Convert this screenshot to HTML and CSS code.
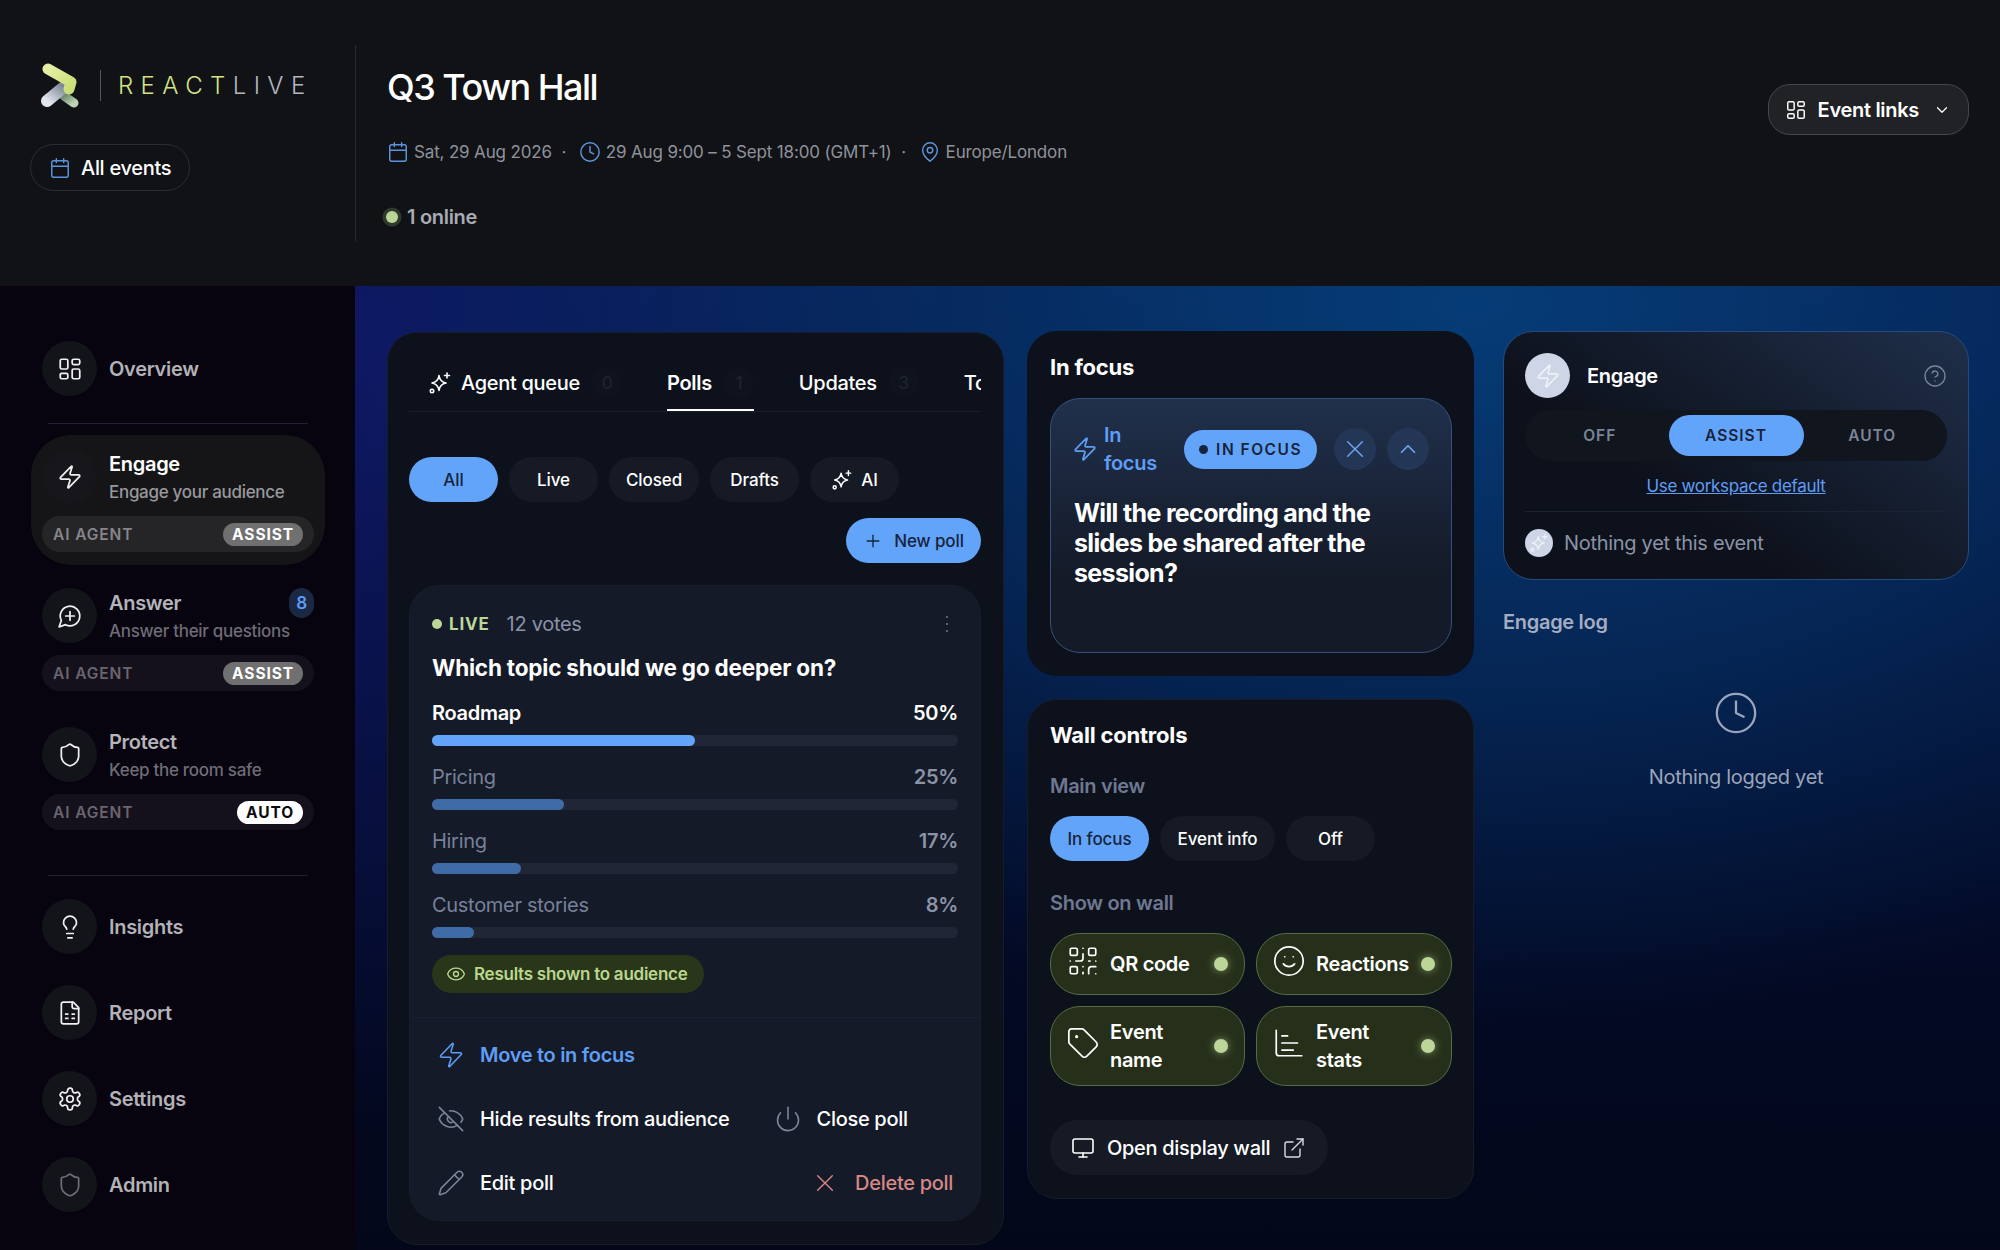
FILE: index.html
```html
<!DOCTYPE html>
<html lang="en">
<head>
    <meta charset="UTF-8">
    <meta name="viewport" content="width=device-width, initial-scale=1.0">
    <title>Q3 Town Hall</title>
    <link rel="stylesheet" href="styles.css">
</head>
<body>
    <svg class="sprite" xmlns="http://www.w3.org/2000/svg">
        <symbol id="i-dash" viewBox="0 0 24 24"><rect x="3" y="3" width="7" height="9" rx="1.5"/><rect x="14" y="3" width="7" height="5" rx="1.5"/><rect x="14" y="12" width="7" height="9" rx="1.5"/><rect x="3" y="16" width="7" height="5" rx="1.5"/></symbol>
        <symbol id="i-zap" viewBox="0 0 24 24"><path d="M4 14a1 1 0 0 1-.78-1.63l9.9-10.2a.5.5 0 0 1 .86.46l-1.92 6.02A1 1 0 0 0 13 10h7a1 1 0 0 1 .78 1.63l-9.9 10.2a.5.5 0 0 1-.86-.46l1.92-6.02A1 1 0 0 0 11 14z"/></symbol>
        <symbol id="i-msg" viewBox="0 0 24 24"><path d="M7.9 20A9 9 0 1 0 4 16.1L2 22Z"/><path d="M8 12h8"/><path d="M12 8v8"/></symbol>
        <symbol id="i-shield" viewBox="0 0 24 24"><path d="M20 13c0 5-3.5 7.5-7.66 8.95a1 1 0 0 1-.67-.01C7.5 20.5 4 18 4 13V6a1 1 0 0 1 1-1c2 0 4.5-1.2 6.24-2.72a1.17 1.17 0 0 1 1.52 0C14.51 3.81 17 5 19 5a1 1 0 0 1 1 1z"/></symbol>
        <symbol id="i-bulb" viewBox="0 0 24 24"><path d="M15 14c.2-1 .7-1.7 1.5-2.5 1-.9 1.5-2.2 1.5-3.5A6 6 0 0 0 6 8c0 1 .2 2.2 1.5 3.5.7.7 1.3 1.5 1.5 2.5"/><path d="M9 18h6"/><path d="M10 22h4"/></symbol>
        <symbol id="i-report" viewBox="0 0 24 24"><path d="M15 2H6a2 2 0 0 0-2 2v16a2 2 0 0 0 2 2h12a2 2 0 0 0 2-2V7Z"/><path d="M14 2v4a2 2 0 0 0 2 2h4"/><path d="M8 13h2"/><path d="M14 13h2"/><path d="M8 17h2"/><path d="M14 17h2"/></symbol>
        <symbol id="i-gear" viewBox="0 0 24 24"><path d="M12.22 2h-.44a2 2 0 0 0-2 2v.18a2 2 0 0 1-1 1.73l-.43.25a2 2 0 0 1-2 0l-.15-.08a2 2 0 0 0-2.73.73l-.22.38a2 2 0 0 0 .73 2.73l.15.1a2 2 0 0 1 1 1.72v.51a2 2 0 0 1-1 1.74l-.15.09a2 2 0 0 0-.73 2.73l.22.38a2 2 0 0 0 2.73.73l.15-.08a2 2 0 0 1 2 0l.43.25a2 2 0 0 1 1 1.73V20a2 2 0 0 0 2 2h.44a2 2 0 0 0 2-2v-.18a2 2 0 0 1 1-1.73l.43-.25a2 2 0 0 1 2 0l.15.08a2 2 0 0 0 2.73-.73l.22-.39a2 2 0 0 0-.73-2.73l-.15-.08a2 2 0 0 1-1-1.74v-.5a2 2 0 0 1 1-1.74l.15-.09a2 2 0 0 0 .73-2.73l-.22-.38a2 2 0 0 0-2.73-.73l-.15.08a2 2 0 0 1-2 0l-.43-.25a2 2 0 0 1-1-1.73V4a2 2 0 0 0-2-2z"/><circle cx="12" cy="12" r="3"/></symbol>
        <symbol id="i-cal" viewBox="0 0 24 24"><path d="M8 2v4"/><path d="M16 2v4"/><rect x="3" y="4" width="18" height="18" rx="2"/><path d="M3 10h18"/></symbol>
        <symbol id="i-clock" viewBox="0 0 24 24"><circle cx="12" cy="12" r="10"/><path d="M12 6v6l4 2"/></symbol>
        <symbol id="i-pin" viewBox="0 0 24 24"><path d="M20 10c0 6-8 12-8 12s-8-6-8-12a8 8 0 0 1 16 0Z"/><circle cx="12" cy="10" r="3"/></symbol>
        <symbol id="i-down" viewBox="0 0 24 24"><path d="m6 9 6 6 6-6"/></symbol>
        <symbol id="i-up" viewBox="0 0 24 24"><path d="m18 15-6-6-6 6"/></symbol>
        <symbol id="i-spark" viewBox="0 0 24 24"><path d="M11 4.500c.6 4.600 2.400 6.600 7 7.500-4.600.9-6.400 2.900-7 7.500-.6-4.600-2.400-6.600-7-7.500 4.600-.9 6.400-2.900 7-7.500z"/><path d="M19 2v5"/><path d="M21.500 4.500h-5"/><circle cx="4" cy="20" r="1.700"/></symbol>
        <symbol id="i-plus" viewBox="0 0 24 24"><path d="M5 12h14"/><path d="M12 5v14"/></symbol>
        <symbol id="i-x" viewBox="0 0 24 24"><path d="m4 4 16 16"/><path d="M20 4 4 20"/></symbol>
        <symbol id="i-eye" viewBox="0 0 24 24"><path d="M2.062 12.348a1 1 0 0 1 0-.696 10.750 10.750 0 0 1 19.876 0 1 1 0 0 1 0 .696 10.750 10.750 0 0 1-19.876 0"/><circle cx="12" cy="12" r="3"/></symbol>
        <symbol id="i-eyeoff" viewBox="0 0 24 24"><path d="M10.733 5.076a10.744 10.744 0 0 1 11.205 6.575 1 1 0 0 1 0 .696 10.747 10.747 0 0 1-1.444 2.490"/><path d="M14.084 14.158a3 3 0 0 1-4.242-4.242"/><path d="M17.479 17.499a10.750 10.750 0 0 1-15.417-5.151 1 1 0 0 1 0-.696 10.750 10.750 0 0 1 4.446-5.143"/><path d="m2 2 20 20"/></symbol>
        <symbol id="i-power" viewBox="0 0 24 24"><path d="M12 2v10"/><path d="M18.400 6.600a9 9 0 1 1-12.770.040"/></symbol>
        <symbol id="i-pencil" viewBox="0 0 24 24"><path d="M21.174 6.812a1 1 0 0 0-3.986-3.987L3.842 16.174a2 2 0 0 0-.5.830l-1.321 4.352a.5.5 0 0 0 .623.622l4.353-1.320a2 2 0 0 0 .830-.497z"/><path d="m15 5 4 4"/></symbol>
        <symbol id="i-qr" viewBox="0 0 24 24"><rect x="3" y="3" width="5" height="5" rx="1"/><rect x="16" y="3" width="5" height="5" rx="1"/><rect x="3" y="16" width="5" height="5" rx="1"/><path d="M21 16h-3a2 2 0 0 0-2 2v3"/><path d="M21 21v.01"/><path d="M12 7v3a2 2 0 0 1-2 2H7"/><path d="M3 12h.01"/><path d="M12 3h.01"/><path d="M12 16v.01"/><path d="M16 12h1"/><path d="M21 12v.01"/><path d="M12 21v-1"/></symbol>
        <symbol id="i-smile" viewBox="0 0 24 24"><circle cx="12" cy="12" r="10"/><path d="M8 14s1.500 2 4 2 4-2 4-2"/><path d="M9 9h.01"/><path d="M15 9h.01"/></symbol>
        <symbol id="i-tag" viewBox="0 0 24 24"><path d="M12.586 2.586A2 2 0 0 0 11.172 2H4a2 2 0 0 0-2 2v7.172a2 2 0 0 0 .586 1.414l8.704 8.704a2.426 2.426 0 0 0 3.420 0l6.580-6.580a2.426 2.426 0 0 0 0-3.420z"/><circle cx="7.500" cy="7.500" r=".5"/></symbol>
        <symbol id="i-chart" viewBox="0 0 24 24"><path d="M3 3v16a2 2 0 0 0 2 2h16"/><path d="M7 7h4"/><path d="M7 12h11"/><path d="M7 17h8"/></symbol>
        <symbol id="i-monitor" viewBox="0 0 24 24"><rect x="2" y="3" width="20" height="14" rx="2"/><path d="M8 21h8"/><path d="M12 17v4"/></symbol>
        <symbol id="i-ext" viewBox="0 0 24 24"><path d="M15 3h6v6"/><path d="M10 14 21 3"/><path d="M18 13v6a2 2 0 0 1-2 2H5a2 2 0 0 1-2-2V8a2 2 0 0 1 2-2h6"/></symbol>
        <symbol id="i-help" viewBox="0 0 24 24"><circle cx="12" cy="12" r="10"/><path d="M9.090 9a3 3 0 0 1 5.830 1c0 2-3 3-3 3"/><path d="M12 17h.01"/></symbol>
    </svg>

    <header class="topbar">
        <div class="brand">
            <div class="logo">
                <svg class="logo-mark" viewBox="0 0 40 46" fill="none" stroke-linecap="round" stroke-linejoin="round">
                    <defs>
                        <linearGradient id="logoLime" x1="0" y1="0" x2="1" y2="1"><stop offset="0" stop-color="#e4efa4"/><stop offset="1" stop-color="#cbdd78"/></linearGradient>
                        <linearGradient id="logoGrey" x1="0" y1="1" x2="1" y2="0"><stop offset="0" stop-color="#e3e7ee"/><stop offset="1" stop-color="#7d8798"/></linearGradient>
                        <linearGradient id="logoGreen" x1="0" y1="0" x2="1" y2="1"><stop offset="0" stop-color="#6f8a70"/><stop offset="1" stop-color="#bdd4b4"/></linearGradient>
                    </defs>
                    <path d="M24 34 34 41" stroke="url(#logoGreen)" stroke-width="9"/>
                    <path d="M7 39 24 25" stroke="url(#logoGrey)" stroke-width="12"/>
                    <path d="M8 7 31 20 29 27" stroke="url(#logoLime)" stroke-width="11"/>
                </svg>
                <span class="logo-bar"></span>
                <span class="logo-text"><span class="logo-lime">REACT</span>LIVE</span>
            </div>
            <a class="all-events"><svg class="ic ic-22 blue"><use href="#i-cal"/></svg>All events</a>
        </div>
        <div class="event-info">
            <h1>Q3 Town Hall</h1>
            <div class="meta">
                <svg class="ic ic-22 blue"><use href="#i-cal"/></svg><span>Sat, 29 Aug 2026</span><span class="sep">·</span>
                <svg class="ic ic-22 blue"><use href="#i-clock"/></svg><span>29 Aug 9:00 – 5 Sept 18:00 (GMT+1)</span><span class="sep">·</span>
                <svg class="ic ic-22 blue"><use href="#i-pin"/></svg><span>Europe/London</span>
            </div>
            <div class="online"><span class="online-dot"></span>1 online</div>
        </div>
        <button class="event-links"><svg class="ic ic-22"><use href="#i-dash"/></svg>Event links<svg class="ic ic-18"><use href="#i-down"/></svg></button>
    </header>

    <div class="layout">
        <nav class="sidebar">
            <a class="nav-link"><span class="nav-circle"><svg class="ic ic-26"><use href="#i-dash"/></svg></span>Overview</a>
            <div class="nav-rule first"></div>

            <div class="nav-card active">
                <div class="nav-main">
                    <span class="nav-circle"><svg class="ic ic-26"><use href="#i-zap"/></svg></span>
                    <div class="nav-label"><div class="nav-title">Engage</div><div class="nav-sub">Engage your audience</div></div>
                </div>
                <div class="agent"><span>AI AGENT</span><span class="agent-mode">ASSIST</span></div>
            </div>
            <div class="nav-card">
                <div class="nav-main">
                    <span class="nav-circle"><svg class="ic ic-26"><use href="#i-msg"/></svg></span>
                    <div class="nav-label"><div class="nav-title">Answer</div><div class="nav-sub">Answer their questions</div></div>
                    <span class="count">8</span>
                </div>
                <div class="agent"><span>AI AGENT</span><span class="agent-mode">ASSIST</span></div>
            </div>
            <div class="nav-card">
                <div class="nav-main">
                    <span class="nav-circle"><svg class="ic ic-26"><use href="#i-shield"/></svg></span>
                    <div class="nav-label"><div class="nav-title">Protect</div><div class="nav-sub">Keep the room safe</div></div>
                </div>
                <div class="agent"><span>AI AGENT</span><span class="agent-mode auto">AUTO</span></div>
            </div>

            <div class="nav-rule second"></div>
            <div class="nav-list">
                <a class="nav-link"><span class="nav-circle"><svg class="ic ic-26"><use href="#i-bulb"/></svg></span>Insights</a>
                <a class="nav-link"><span class="nav-circle"><svg class="ic ic-26"><use href="#i-report"/></svg></span>Report</a>
                <a class="nav-link"><span class="nav-circle"><svg class="ic ic-26"><use href="#i-gear"/></svg></span>Settings</a>
                <a class="nav-link"><span class="nav-circle"><svg class="ic ic-26 dim"><use href="#i-shield"/></svg></span>Admin</a>
            </div>
        </nav>

        <main class="content">
            <section class="panel polls">
                <div class="tabs">
                    <div class="tab first"><svg class="ic ic-26"><use href="#i-spark"/></svg>Agent queue<span class="tab-count">0</span></div>
                    <div class="tab current">Polls<span class="tab-count">1</span></div>
                    <div class="tab">Updates<span class="tab-count">3</span></div>
                    <div class="tab">Topics</div>
                </div>
                <div class="chips filter-chips">
                    <span class="chip on">All</span>
                    <span class="chip">Live</span>
                    <span class="chip">Closed</span>
                    <span class="chip">Drafts</span>
                    <span class="chip"><svg class="ic ic-22"><use href="#i-spark"/></svg>AI</span>
                </div>
                <div class="new-row"><span class="chip on new-poll"><svg class="ic ic-20"><use href="#i-plus"/></svg>New poll</span></div>

                <article class="poll">
                    <div class="poll-body">
                        <div class="poll-top">
                            <span class="live-dot"></span><span class="live">LIVE</span><span class="votes">12 votes</span>
                            <span class="kebab"><i></i><i></i><i></i></span>
                        </div>
                        <h3 class="question">Which topic should we go deeper on?</h3>
                        <div class="option lead"><div class="option-row"><span>Roadmap</span><span>50%</span></div><div class="track"><div class="fill" style="width:50%"></div></div></div>
                        <div class="option"><div class="option-row"><span>Pricing</span><span class="pct">25%</span></div><div class="track"><div class="fill" style="width:25%"></div></div></div>
                        <div class="option"><div class="option-row"><span>Hiring</span><span class="pct">17%</span></div><div class="track"><div class="fill" style="width:17%"></div></div></div>
                        <div class="option"><div class="option-row"><span>Customer stories</span><span class="pct">8%</span></div><div class="track"><div class="fill" style="width:8%"></div></div></div>
                        <div class="results"><svg class="ic ic-20"><use href="#i-eye"/></svg>Results shown to audience</div>
                    </div>
                    <div class="poll-actions">
                        <div class="action-row"><a class="action accent"><svg class="ic ic-28"><use href="#i-zap"/></svg>Move to in focus</a></div>
                        <div class="action-row"><a class="action"><svg class="ic ic-28 muted"><use href="#i-eyeoff"/></svg>Hide results from audience</a><a class="action close"><svg class="ic ic-28 muted"><use href="#i-power"/></svg>Close poll</a></div>
                        <div class="action-row spread"><a class="action"><svg class="ic ic-28 muted"><use href="#i-pencil"/></svg>Edit poll</a><a class="action danger"><svg class="ic ic-22"><use href="#i-x"/></svg>Delete poll</a></div>
                    </div>
                </article>
            </section>

            <div class="middle">
                <section class="panel focus-panel">
                    <h2>In focus</h2>
                    <div class="focus-card">
                        <div class="focus-head">
                            <svg class="ic ic-26 accent-ic"><use href="#i-zap"/></svg>
                            <span class="focus-label">In focus</span>
                            <span class="focus-pill"><i></i>IN FOCUS</span>
                            <span class="round first-round"><svg class="ic ic-22"><use href="#i-x"/></svg></span>
                            <span class="round"><svg class="ic ic-26"><use href="#i-up"/></svg></span>
                        </div>
                        <p class="focus-text">Will the recording and the slides be shared after the session?</p>
                    </div>
                </section>

                <section class="panel wall">
                    <h2>Wall controls</h2>
                    <div class="field-label">Main view</div>
                    <div class="chips">
                        <span class="chip on">In focus</span>
                        <span class="chip">Event info</span>
                        <span class="chip">Off</span>
                    </div>
                    <div class="field-label second-label">Show on wall</div>
                    <div class="toggles">
                        <div class="toggle"><svg class="ic ic-34"><use href="#i-qr"/></svg><span class="toggle-text">QR code</span><span class="toggle-dot"></span></div>
                        <div class="toggle"><svg class="ic ic-34"><use href="#i-smile"/></svg><span class="toggle-text">Reactions</span><span class="toggle-dot"></span></div>
                        <div class="toggle"><svg class="ic ic-34"><use href="#i-tag"/></svg><span class="toggle-text">Event name</span><span class="toggle-dot"></span></div>
                        <div class="toggle"><svg class="ic ic-34"><use href="#i-chart"/></svg><span class="toggle-text">Event stats</span><span class="toggle-dot"></span></div>
                    </div>
                    <a class="open-wall"><svg class="ic ic-24"><use href="#i-monitor"/></svg>Open display wall<svg class="ic ic-24"><use href="#i-ext"/></svg></a>
                </section>
            </div>

            <aside class="right">
                <section class="agent-card">
                    <div class="agent-head">
                        <span class="agent-avatar"><svg class="ic ic-26"><use href="#i-zap"/></svg></span>
                        <span class="agent-name">Engage</span>
                        <svg class="ic ic-24 help"><use href="#i-help"/></svg>
                    </div>
                    <div class="segments">
                        <span class="segment">OFF</span>
                        <span class="segment on">ASSIST</span>
                        <span class="segment">AUTO</span>
                    </div>
                    <a class="default-link">Use workspace default</a>
                    <div class="agent-rule"></div>
                    <div class="agent-note"><span class="note-avatar"><svg class="ic ic-20"><use href="#i-spark"/></svg></span>Nothing yet this event</div>
                </section>
                <div class="log-title">Engage log</div>
                <div class="log-empty">
                    <svg class="ic ic-40"><use href="#i-clock"/></svg>
                    <div>Nothing logged yet</div>
                </div>
            </aside>
        </main>
    </div>
</body>
</html>
```

FILE: styles.css
```css
* {
    box-sizing: border-box;
}
html, body {
    margin: 0;
    height: 1250px;
    overflow: hidden;
}
body {
    font-family: Inter, "Noto Sans", sans-serif;
    font-size: 20px;
    letter-spacing: -0.3px;
    color: #fff;
    background: #07030f;
}
h1, h2, h3, p {
    margin: 0;
}
.sprite {
    display: none;
}

/* icons */
.ic {
    fill: none;
    stroke: currentColor;
    stroke-width: 1.6;
    stroke-linecap: round;
    stroke-linejoin: round;
    flex: none;
}
.ic-18 { width: 18px; height: 18px; }
.ic-20 { width: 20px; height: 20px; }
.ic-22 { width: 22px; height: 22px; }
.ic-24 { width: 24px; height: 24px; }
.ic-26 { width: 26px; height: 26px; }
.ic-28 { width: 28px; height: 28px; stroke-width: 1.35; }
.ic-34 { width: 34px; height: 34px; stroke-width: 1.2; }
.ic-40 { width: 46px; height: 46px; stroke-width: 1.2; }
.blue { color: #5c94dc; }
.dim { color: #6b6d78; }
.muted { color: #7c8598; }

/* header */
.topbar {
    display: flex;
    align-items: flex-start;
    height: 286px;
    padding-top: 45px;
    background: #111216;
}
.brand {
    width: 356px;
    height: 196px;
    padding: 17px 0 0 30px;
    border-right: 1px solid #2a2b30;
}
.logo {
    display: flex;
    align-items: center;
    height: 46px;
    padding-left: 10px;
}
.logo-mark {
    width: 40px;
    height: 46px;
}
.logo-bar {
    width: 1px;
    height: 31px;
    margin: 0 17px 0 20px;
    background: #55565c;
}
.logo-text {
    font-weight: 300;
    font-size: 24px;
    letter-spacing: 7.4px;
    color: #b0b6c2;
}
.logo-lime {
    color: #d3e385;
}
.all-events {
    display: inline-flex;
    align-items: center;
    gap: 10px;
    height: 47px;
    margin-top: 36px;
    padding: 0 18px;
    border: 1px solid #2c2d32;
    border-radius: 24px;
    font-weight: 500;
}
.event-info {
    padding: 18px 0 0 31px;
}
h1 {
    font-size: 36px;
    line-height: 48px;
    font-weight: 500;
    letter-spacing: -1.5px;
}
.meta {
    display: flex;
    align-items: center;
    height: 26px;
    margin-top: 28px;
    font-size: 17px;
    letter-spacing: -0.16px;
    color: #8e929c;
}
.meta .ic {
    margin-right: 5px;
}
.meta .sep {
    width: 30px;
    text-align: center;
    margin-left: -3px;
}
.online {
    display: flex;
    align-items: center;
    gap: 6px;
    height: 26px;
    margin-top: 39px;
    margin-left: -4px;
    font-weight: 600;
    color: #a7abb3;
}
.online-dot {
    width: 12px;
    height: 12px;
    margin: 0 3px;
    border-radius: 50%;
    background: #bcd69a;
    box-shadow: 0 0 0 3.5px #2f3a2c;
}
.event-links {
    display: flex;
    align-items: center;
    gap: 11px;
    height: 51px;
    margin: 39px 31px 0 auto;
    padding: 0 17px 0 16px;
    border: 1px solid #46474c;
    border-radius: 22px;
    background: #212226;
    color: #fff;
    font: 600 20px Inter, sans-serif;
    letter-spacing: -0.3px;
}
.event-links .ic-18 {
    margin-left: 3px;
}

.layout {
    display: flex;
    height: 964px;
}

/* sidebar */
.sidebar {
    width: 355px;
    flex: none;
    padding: 55px 30px 0 31px;
    background: #07030f;
}
.nav-link {
    display: flex;
    align-items: center;
    gap: 12px;
    margin-left: 11px;
    font-weight: 600;
    color: #b3b2b6;
}
.nav-circle {
    display: flex;
    align-items: center;
    justify-content: center;
    width: 55px;
    height: 55px;
    flex: none;
    border-radius: 50%;
    background: #13131a;
    color: #f0f0f2;
}
.nav-rule {
    height: 1px;
    margin: 0 17px;
    background: #1f2133;
}
.nav-rule.first {
    margin-top: 27px;
    margin-bottom: 11px;
}
.nav-rule.second {
    margin-top: 32px;
    margin-bottom: 23px;
}
.nav-list {
    display: flex;
    flex-direction: column;
    gap: 31px;
}
.nav-card {
    margin-bottom: 9px;
    padding: 14px 11px 13px;
    border-radius: 40px;
}
.nav-card.active {
    background: #151518;
}
.nav-main {
    display: flex;
    align-items: flex-start;
    gap: 12px;
    height: 55px;
    position: relative;
}
.nav-label {
    padding-top: 2px;
}
.nav-title {
    font-weight: 600;
    line-height: 27px;
    color: #b5b4b8;
}
.nav-sub {
    font-size: 17px;
    font-weight: 500;
    line-height: 28px;
    color: #6f6c76;
}
.active .nav-title {
    color: #fff;
}
.active .nav-sub {
    color: #98989d;
}
.active .nav-circle {
    background: #16161b;
}
.count {
    position: absolute;
    top: 0;
    right: 0;
    width: 25px;
    height: 30px;
    border-radius: 15px;
    background: #1a2844;
    color: #5f9df5;
    font-size: 17px;
    font-weight: 600;
    line-height: 30px;
    text-align: center;
}
.agent {
    display: flex;
    align-items: center;
    justify-content: space-between;
    height: 36px;
    margin-top: 12px;
    padding: 0 11px;
    border-radius: 18px;
    background: #15111c;
    font-size: 15.5px;
    font-weight: 600;
    letter-spacing: 0.9px;
    color: #68656e;
}
.active .agent {
    background: #252528;
    color: #86868b;
}
.agent-mode {
    height: 23px;
    padding: 0 9px;
    border-radius: 12px;
    background: #707070;
    color: #fff;
    font-weight: 700;
    line-height: 23px;
}
.agent-mode.auto {
    background: #fff;
    color: #0b0b10;
}

/* main area */
.content {
    display: flex;
    align-items: flex-start;
    flex: 1;
    padding: 46px 31px 0 32px;
    background:
        radial-gradient(ellipse 1150px 720px at 68% 2%, rgba(6, 70, 132, 0.82), rgba(6, 70, 132, 0.42) 55%, rgba(6, 70, 132, 0)),
        radial-gradient(ellipse 620px 760px at 0 8%, rgba(18, 28, 120, 0.65), rgba(18, 28, 120, 0)),
        linear-gradient(to bottom, #06103c, #030a26 65%, #030719);
}
.panel {
    border-radius: 30px;
    background: #0d111b;
}
h2 {
    font-size: 22px;
    line-height: 28px;
    font-weight: 700;
    letter-spacing: -0.2px;
}

/* polls */
.polls {
    width: 617px;
    flex: none;
    padding: 21px 22px 23px 21px;
    border: 1px solid #171c28;
}
.tabs {
    display: flex;
    gap: 45px;
    height: 58px;
    overflow: hidden;
    border-bottom: 1px solid #1a1f2b;
    white-space: nowrap;
}
.tab {
    display: flex;
    align-items: center;
    flex: none;
    height: 57px;
    font-weight: 500;
}
.tab.first {
    margin-left: 19px;
}
.tab.first .ic {
    margin-right: 9px;
    width: 24px;
    height: 24px;
}
.tab.current {
    font-weight: 600;
    height: 58px;
    border-bottom: 3px solid #fff;
    border-radius: 2px;
    padding-top: 3px;
}
.tab-count {
    width: 30px;
    height: 30px;
    margin-left: 12px;
    border-radius: 50%;
    background: #0f131d;
    color: #1d222e;
    font-size: 17px;
    font-weight: 500;
    line-height: 30px;
    text-align: center;
}
.chips {
    display: flex;
    gap: 11px;
}
.filter-chips {
    margin-top: 45px;
}
.chip {
    display: flex;
    align-items: center;
    justify-content: center;
    gap: 8px;
    min-width: 89px;
    height: 45px;
    padding: 0 17px;
    border-radius: 23px;
    background: #151a25;
    font-size: 17px;
    font-weight: 500;
    letter-spacing: -0.1px;
}
.chip.on {
    background: #63a4fb;
    color: #17233a;
}
.new-row {
    display: flex;
    justify-content: flex-end;
    margin-top: 16px;
}
.new-poll {
    width: 135px;
    gap: 11px;
}
.poll {
    margin-top: 22px;
    border: 1px solid #181e2b;
    border-radius: 30px;
    background: #141a27;
}
.poll-body {
    padding: 25px 22px 24px;
    border-bottom: 1px solid #1a2030;
}
.poll-top {
    display: flex;
    align-items: center;
    height: 26px;
}
.live-dot {
    width: 10px;
    height: 10px;
    border-radius: 50%;
    background: #bcd69a;
}
.live {
    margin-left: 7px;
    font-size: 17px;
    font-weight: 700;
    letter-spacing: 0.8px;
    color: #bcd69a;
}
.votes {
    margin-left: 17px;
    color: #8b93a5;
}
.kebab {
    display: flex;
    flex-direction: column;
    gap: 5px;
    margin-left: auto;
    margin-right: 10px;
}
.kebab i {
    width: 2px;
    height: 2px;
    background: #6f778a;
    border-radius: 50%;
}
.question {
    margin-top: 16px;
    font-size: 22.5px;
    line-height: 30px;
    font-weight: 700;
    letter-spacing: -0.2px;
}
.option {
    margin-top: 18px;
    color: #78819a;
}
.question + .option {
    margin-top: 17px;
}
.option-row {
    display: flex;
    justify-content: space-between;
    height: 26px;
    line-height: 26px;
}
.pct {
    font-weight: 600;
    color: #8b93a5;
}
.lead .option-row {
    color: #fff;
    font-weight: 600;
}
.track {
    height: 11px;
    margin-top: 9px;
    border-radius: 6px;
    background: #202636;
}
.fill {
    height: 100%;
    border-radius: 6px;
    background: #3f6ba6;
}
.lead .fill {
    background: #63a4fb;
}
.results {
    display: inline-flex;
    align-items: center;
    gap: 8px;
    height: 38px;
    margin-top: 17px;
    padding: 0 16px 0 14px;
    border-radius: 19px;
    background: #2a3619;
    color: #b9d68f;
    font-size: 17px;
    font-weight: 600;
    letter-spacing: -0.25px;
}
.poll-actions {
    padding: 5px 27px 5px 27px;
}
.action-row {
    display: flex;
    align-items: center;
    height: 64px;
    gap: 44px;
}
.action-row.spread {
    justify-content: space-between;
}
.action {
    display: flex;
    align-items: center;
    gap: 15px;
    font-weight: 500;
}
.action.accent {
    color: #5f9df5;
    font-weight: 600;
}
.action.danger {
    color: #d58885;
    gap: 19px;
}
.action.danger .ic {
    stroke-width: 1.5;
}

/* middle column */
.middle {
    display: flex;
    flex-direction: column;
    gap: 23px;
    width: 447px;
    flex: none;
    margin-left: 23px;
}
.focus-panel {
    padding: 22px 22px 23px 23px;
    margin-top: -1px;
}
.focus-card {
    min-height: 255px;
    margin-top: 17px;
    padding: 22px 22px 0 23px;
    border: 1px solid #33517a;
    border-radius: 30px;
    background: linear-gradient(to bottom, #20304c, #141a27 70%);
}
.focus-head {
    display: flex;
    align-items: center;
    height: 56px;
}
.accent-ic {
    color: #5f9df5;
    margin-left: -2px;
}
.focus-label {
    width: min-content;
    margin-left: 6px;
    font-weight: 600;
    line-height: 28px;
    color: #5f9df5;
}
.focus-pill {
    display: flex;
    align-items: center;
    gap: 8px;
    height: 39px;
    margin-left: auto;
    padding: 0 15px;
    border-radius: 20px;
    background: #63a4fb;
    color: #17233a;
    font-size: 15.5px;
    font-weight: 600;
    letter-spacing: 1.5px;
}
.focus-pill i {
    width: 9px;
    height: 9px;
    border-radius: 50%;
    background: #17233a;
}
.round {
    display: flex;
    align-items: center;
    justify-content: center;
    width: 42px;
    height: 42px;
    margin-left: 11px;
    border-radius: 50%;
    background: #243655;
    color: #6ea5f2;
}
.first-round {
    margin-left: 17px;
}
.focus-text {
    margin-top: 21px;
    width: 340px;
    font-size: 25px;
    line-height: 30px;
    font-weight: 700;
    letter-spacing: -0.65px;
}
.wall {
    padding: 21px 22px 23px 22px;
    border: 1px solid #171c28;
}
.field-label {
    height: 26px;
    margin-top: 24px;
    margin-bottom: 17px;
    font-weight: 600;
    line-height: 26px;
    color: #6f7892;
}
.second-label {
    margin-top: 29px;
}
.wall .chip {
    padding: 0 16px;
}
.wall .chip:nth-child(1) { width: 99px; }
.wall .chip:nth-child(2) { width: 115px; }
.toggles {
    display: grid;
    grid-template-columns: 195px 196px;
    gap: 11px;
}
.toggle {
    display: flex;
    align-items: center;
    gap: 10px;
    min-height: 62px;
    padding: 11px 16px 11px 15px;
    border: 1px solid #586b45;
    border-radius: 30px;
    background: #262f1a;
    font-weight: 600;
    line-height: 28px;
}
.toggle .ic {
    margin-top: -6px;
}
.toggle-text {
    flex: 1;
    min-width: 0;
}
.toggle-dot {
    width: 14px;
    height: 14px;
    flex: none;
    border-radius: 50%;
    background: #bcd69a;
    box-shadow: 0 0 8px rgba(188, 214, 154, 0.6);
}
.open-wall {
    display: inline-flex;
    align-items: center;
    gap: 12px;
    height: 55px;
    margin-top: 34px;
    padding: 0 22px 0 21px;
    border-radius: 28px;
    background: #151a25;
    font-weight: 500;
}
.open-wall .ic:last-child {
    color: #d8dce4;
    stroke-width: 1.4;
}

/* right column */
.right {
    width: 466px;
    flex: none;
    margin-left: 29px;
    margin-top: -1px;
}
.agent-card {
    padding: 21px 21px 22px;
    border: 1px solid #264a7c;
    border-radius: 30px;
    background: linear-gradient(35deg, #0d111b 35%, #1f2f4a 100%);
}
.agent-head {
    display: flex;
    align-items: center;
    height: 45px;
}
.agent-avatar {
    display: flex;
    align-items: center;
    justify-content: center;
    width: 45px;
    height: 45px;
    border-radius: 50%;
    background: #cdd5e6;
    color: #eef1f7;
}
.agent-name {
    margin-left: 17px;
    font-weight: 600;
}
.help {
    margin-left: auto;
    color: #7c8598;
    stroke-width: 1.3;
}
.segments {
    display: grid;
    grid-template-columns: 1fr 135px 1fr;
    align-items: center;
    height: 51px;
    margin-top: 12px;
    padding: 0 6px;
    border-radius: 26px;
    background: #11151e;
}
.segment {
    text-align: center;
    font-size: 15.5px;
    font-weight: 600;
    letter-spacing: 1px;
    color: #7c8598;
}
.segment.on {
    height: 41px;
    border-radius: 21px;
    background: #63a4fb;
    color: #17233a;
    line-height: 41px;
}
.default-link {
    display: block;
    margin-top: 13px;
    font-size: 17px;
    line-height: 24px;
    text-align: center;
    text-decoration: underline;
    color: #5f9df5;
}
.agent-rule {
    height: 1px;
    margin-top: 13px;
    background: #1c2230;
}
.agent-note {
    display: flex;
    align-items: center;
    gap: 11px;
    margin-top: 17px;
    height: 28px;
    color: #8b93a5;
}
.note-avatar {
    display: flex;
    align-items: center;
    justify-content: center;
    width: 28px;
    height: 28px;
    border-radius: 50%;
    background: #cdd5e6;
    color: #eef1f7;
}
.log-title {
    margin-top: 29px;
    font-weight: 600;
    line-height: 26px;
    color: #a4adc1;
}
.log-empty {
    display: flex;
    flex-direction: column;
    align-items: center;
    gap: 29px;
    margin-top: 55px;
    color: #9aa5bb;
}
```
